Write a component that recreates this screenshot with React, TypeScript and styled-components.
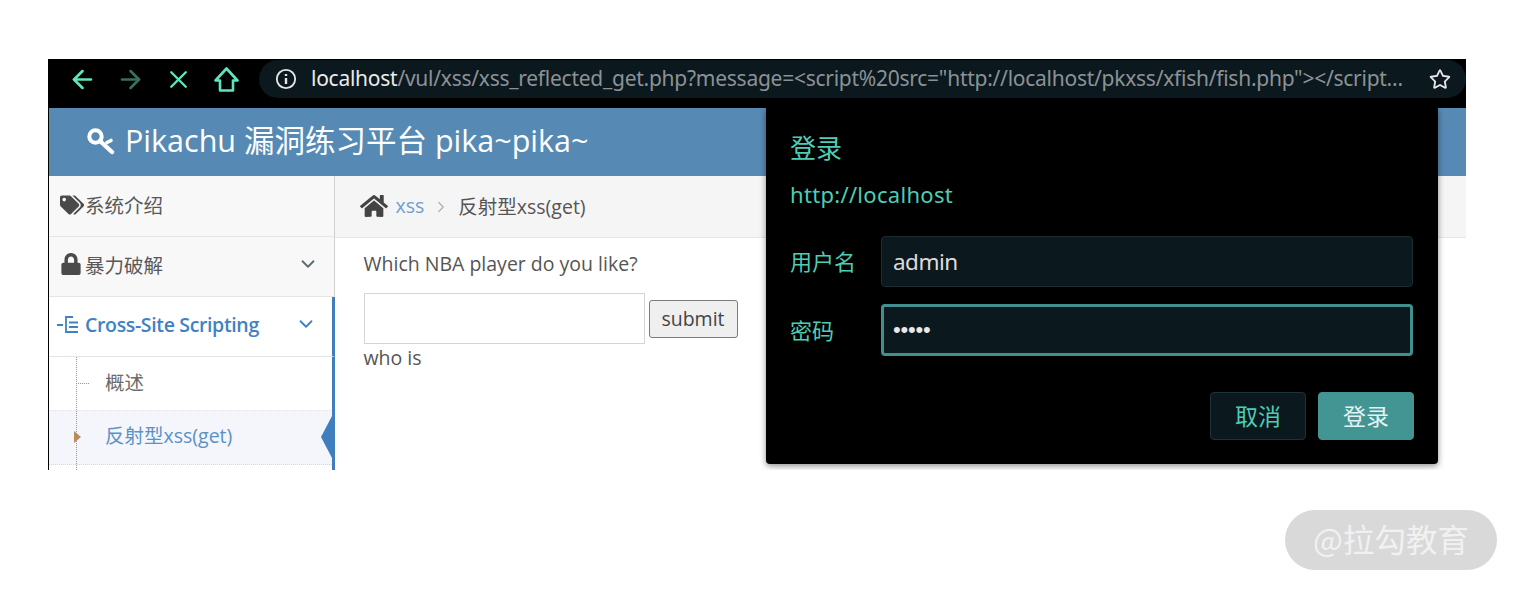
import React from 'react';
import styled, { createGlobalStyle } from 'styled-components';
import { ArrowLeft, ArrowRight, X, ChevronDown, ChevronRight } from 'lucide-react';
import { FaHome, FaLock, FaTags, FaRegStar } from 'react-icons/fa';

const GlobalStyle = createGlobalStyle`
  html, body { margin: 0; padding: 0; background: #fff; }
  body { font-family: "Open Sans", "Noto Sans CJK SC", sans-serif; overflow: hidden; }
`;

const Page = styled.div`
  position: relative;
  width: 1519px;
  height: 590px;
  padding: 59px 53px 0 48px;
  box-sizing: border-box;
`;

const Browser = styled.div`
  width: 1418px;
  height: 411px;
  position: relative;
  overflow: hidden;
  display: flex;
  flex-direction: column;
  background: #fff;
`;

const Toolbar = styled.div`
  height: 49px;
  flex: none;
  background: #000;
  display: flex;
  align-items: flex-start;
  padding-top: 1px;
  box-sizing: border-box;
`;

const NavIcons = styled.div`
  width: 211px;
  flex: none;
  height: 38px;
  display: flex;
  align-items: center;
  padding-left: 18px;
  gap: 16px;
  box-sizing: border-box;
`;

const NavSlot = styled.span<{ $dim?: boolean }>`
  width: 32px;
  height: 32px;
  display: flex;
  align-items: center;
  justify-content: center;
  color: ${(p) => (p.$dim ? '#37705f' : '#5fe3c0')};
`;

const Omnibox = styled.div`
  flex: 1;
  height: 38px;
  background: #0b181e;
  border-radius: 19px;
  display: flex;
  align-items: center;
  padding: 0 15px 0 16px;
  color: #e6e6e6;
  box-sizing: border-box;
`;

const InfoIcon = styled.svg`
  width: 22px;
  height: 22px;
  flex: none;
  margin-right: 14px;
`;

const UrlText = styled.div`
  flex: 1;
  min-width: 0;
  font-family: "Noto Sans", "Liberation Sans", sans-serif;
  font-size: 21px;
  line-height: 26px;
  padding-bottom: 2px;
  letter-spacing: -0.26px;
  white-space: nowrap;
  color: #8b9296;
`;

const Host = styled.span`
  color: #ececec;
`;

const StarWrap = styled.span`
  color: #e6e6e6;
  display: flex;
`;

const Header = styled.div`
  height: 68px;
  flex: none;
  box-sizing: border-box;
  background: #568ab5;
  border-left: 1.5px solid #000;
  display: flex;
  align-items: center;
  padding: 0 0 2px 37px;
  gap: 10px;
  color: #fff;
  font-size: 30.5px;
`;

const HeaderTitle = styled.span`
  line-height: 40px;
  margin-top: -2px;
`;

const Body = styled.div`
  flex: 1;
  display: flex;
  border-left: 1.5px solid #000;
  min-height: 0;
`;

const Sidebar = styled.div`
  width: 285.5px;
  flex: none;
  display: flex;
  flex-direction: column;
  background: #f8f8f8;
`;

const NavRow = styled.div<{ $open?: boolean; $first?: boolean }>`
  height: ${(p) => (p.$first ? '61px' : '60px')};
  flex: none;
  box-sizing: border-box;
  display: flex;
  align-items: center;
  padding: 0 15px ${(p) => (p.$first ? '3px' : '5px')} 11px;
  border-bottom: 1px solid #e5e5e5;
  border-right: ${(p) => (p.$open ? '3px solid #3f7fbf' : '1px solid #cfcfcf')};
  background: ${(p) => (p.$open ? '#fff' : '#f8f8f8')};
  color: ${(p) => (p.$open ? '#3f82c4' : '#585858')};
  font-size: 19.5px;
  font-weight: ${(p) => (p.$open ? 600 : 400)};
  letter-spacing: ${(p) => (p.$open ? '-0.35px' : '0')};
`;

const RowIcon = styled.span`
  width: 25px;
  flex: none;
  display: flex;
  align-items: center;
  color: #4a4a4a;
`;

const TreeSlot = styled(RowIcon)`
  margin-left: -3px;
  width: 28px;
`;

const RowLabel = styled.span`
  flex: 1;
`;

const SubMenu = styled.div`
  position: relative;
  flex: 1;
  background: #fff;
  border-right: 3px solid #3f7fbf;
`;

const SubLine = styled.span`
  position: absolute;
  z-index: 1;
  left: 27px;
  top: 0;
  bottom: 0;
  border-left: 1px dotted #7f9fc4;
`;

const SubRow = styled.div<{ $active?: boolean }>`
  height: ${(p) => (p.$active ? '55px' : '53px')};
  box-sizing: border-box;
  display: flex;
  align-items: center;
  padding: 0 0 ${(p) => (p.$active ? '7px' : '5px')} 56px;
  font-size: 19.5px;
  color: ${(p) => (p.$active ? '#5a92c8' : '#6b6b6b')};
  background: ${(p) => (p.$active ? '#f4f6fb' : '#fff')};
  border-bottom: ${(p) => (p.$active ? '1px dotted #d5d8dc' : 'none')};
  border-top: ${(p) => (p.$active ? '1px dotted #e1e3e6' : 'none')};
  position: relative;
`;

const Tick = styled.span`
  position: absolute;
  left: 29px;
  top: 26px;
  width: 11px;
  border-top: 1px dotted #7f9fc4;
`;

const Pointer = styled.span`
  position: absolute;
  z-index: 2;
  left: 25px;
  top: 20px;
  border-left: 7px solid #b98a5e;
  border-top: 6px solid transparent;
  border-bottom: 6px solid transparent;
`;

const Notch = styled.span`
  position: absolute;
  right: 0;
  top: 5px;
  border-right: 11px solid #3f7fbf;
  border-top: 21px solid transparent;
  border-bottom: 21px solid transparent;
`;

const Main = styled.div`
  flex: 1;
  display: flex;
  flex-direction: column;
`;

const Crumbs = styled.div`
  height: 62px;
  flex: none;
  box-sizing: border-box;
  background: #f5f5f5;
  border-bottom: 1px solid #e5e5e5;
  display: flex;
  align-items: center;
  padding: 0 0 2px 25px;
  font-size: 19.5px;
  color: #555;
`;

const CrumbHome = styled.span`
  display: flex;
  color: #444;
  margin-right: 8px;
`;

const CrumbLink = styled.span`
  color: #6fa0cc;
`;

const CrumbSep = styled.span`
  display: flex;
  color: #b5b5b5;
  margin: 2px 8px 0 8px;
`;

const Content = styled.div`
  padding: 12px 0 0 29px;
  color: #555;
  font-size: 19.5px;
  line-height: 28px;
`;

const FormRow = styled.div`
  display: flex;
  align-items: center;
  gap: 4px;
  margin-top: 15px;
`;

const TextBox = styled.div`
  width: 281px;
  height: 51px;
  box-sizing: border-box;
  border: 1.5px solid #d5d5d5;
  background: #fff;
`;

const Submit = styled.div`
  width: 89px;
  height: 38px;
  box-sizing: border-box;
  border: 1.5px solid #7b7b7b;
  border-radius: 3px;
  background: #efefef;
  display: flex;
  align-items: center;
  justify-content: center;
  font-size: 19.5px;
  color: #444;
`;

const Dialog = styled.div`
  position: absolute;
  left: 718px;
  top: 49px;
  width: 672px;
  height: 356px;
  box-sizing: border-box;
  background: #000;
  border-radius: 0 0 4px 4px;
  box-shadow: 0 2px 6px rgba(0, 0, 0, 0.45);
  padding: 20px 25px 0 24px;
  color: #4ecdb4;
  font-family: "Noto Sans", "Noto Sans CJK SC", sans-serif;
  display: flex;
  flex-direction: column;
`;

const DialogTitle = styled.div`
  font-size: 26px;
  line-height: 40px;
`;

const DialogOrigin = styled.div`
  font-size: 22px;
  line-height: 30px;
  margin-top: 11px;
  letter-spacing: 0.3px;
`;

const Field = styled.div`
  display: flex;
  align-items: center;
  margin-top: 17px;
  &:nth-of-type(3) {
    margin-top: 27px;
  }
`;

const FieldLabel = styled.div`
  width: 91px;
  flex: none;
  font-size: 22px;
  padding-bottom: 3px;
`;

const FieldBox = styled.div<{ $focus?: boolean }>`
  flex: 1;
  height: ${(p) => (p.$focus ? '52px' : '51px')};
  box-sizing: border-box;
  background: #0b181e;
  border: ${(p) => (p.$focus ? '3px solid #3f908e' : '1px solid #1c2c31')};
  border-radius: 4px;
  display: flex;
  align-items: center;
  padding-left: ${(p) => (p.$focus ? '9px' : '11px')};
  color: #dcdcdc;
  font-size: 22.5px;
  letter-spacing: -0.5px;
`;

const Dots = styled.span`
  font-size: 22px;
  letter-spacing: -0.2px;
  color: #e8e8e8;
  font-family: "Liberation Sans", sans-serif;
`;

const Actions = styled.div`
  display: flex;
  justify-content: flex-end;
  gap: 12px;
  margin: 36px -1px 0 0;
`;

const DialogButton = styled.div<{ $primary?: boolean }>`
  width: 96px;
  height: 48px;
  box-sizing: border-box;
  border-radius: 4px;
  padding-bottom: 2px;
  background: ${(p) => (p.$primary ? '#429593' : '#0b181e')};
  border: 1px solid ${(p) => (p.$primary ? '#429593' : '#1c3439')};
  color: ${(p) => (p.$primary ? '#e4f3f1' : '#4ecdb4')};
  font-size: 23px;
  display: flex;
  align-items: center;
  justify-content: center;
`;

const Watermark = styled.div`
  position: absolute;
  left: 1285px;
  top: 510px;
  width: 212px;
  height: 60px;
  box-sizing: border-box;
  padding-bottom: 4px;
  border-radius: 30px;
  background: #d9d9d9;
  color: #f1f1f1;
  font-family: "Noto Sans CJK SC", sans-serif;
  font-size: 31.5px;
  display: flex;
  align-items: center;
  justify-content: center;
`;

const HomeOutline = () => (
  <svg width="25" height="25" viewBox="0 0 25 25" fill="none" stroke="currentColor" strokeWidth="2.6" strokeLinejoin="round">
    <path d="M12.5 1.5 L23.5 13.5 H19 V23.5 H6 V13.5 H1.5 Z" />
  </svg>
);

const KeyIcon = () => (
  <svg width="29" height="29" viewBox="0 0 29 29" fill="none" stroke="#fff" strokeLinecap="round">
    <circle cx="9.5" cy="9.5" r="6.2" strokeWidth="4" />
    <path d="M14 14 L26 25" strokeWidth="4.4" />
    <path d="M21 15.5 L25 13.5" strokeWidth="3.6" />
  </svg>
);

const TreeIcon = () => (
  <svg width="22" height="17" viewBox="0 0 22 17" fill="none" stroke="#3f82c4" strokeWidth="1.8">
    <path d="M0 9 H6 M9 0 V17 M9 1 H16 M12 6.5 H21 M12 11 H21 M9 16 H21" />
  </svg>
);

const App: React.FC = () => {
  return (
    <Page>
      <GlobalStyle />
      <Browser>
        <Toolbar>
          <NavIcons>
            <NavSlot><ArrowLeft size={29} strokeWidth={2.2} /></NavSlot>
            <NavSlot $dim><ArrowRight size={29} strokeWidth={2.2} /></NavSlot>
            <NavSlot><X size={29} strokeWidth={2} /></NavSlot>
            <NavSlot><HomeOutline /></NavSlot>
          </NavIcons>
          <Omnibox>
            <InfoIcon viewBox="0 0 24 24" fill="none" stroke="#e6e6e6" strokeWidth="2">
              <circle cx="12" cy="12" r="10" />
              <path d="M12 11 V17.5 M12 6.5 V8.8" strokeWidth="2.6" />
            </InfoIcon>
            <UrlText>
              <Host>localhost</Host>/vul/xss/xss_reflected_get.php?message=&lt;script%20src="http://localhost/pkxss/xfish/fish.php"&gt;&lt;/script…
            </UrlText>
            <StarWrap><FaRegStar size={22} /></StarWrap>
          </Omnibox>
        </Toolbar>
        <Header>
          <KeyIcon />
          <HeaderTitle>Pikachu 漏洞练习平台 pika~pika~</HeaderTitle>
        </Header>
        <Body>
          <Sidebar>
            <NavRow $first>
              <RowIcon><FaTags size={24} /></RowIcon>
              <RowLabel>系统介绍</RowLabel>
            </NavRow>
            <NavRow>
              <RowIcon><FaLock size={22} /></RowIcon>
              <RowLabel>暴力破解</RowLabel>
              <ChevronDown size={22} strokeWidth={2} color="#5c6a70" />
            </NavRow>
            <NavRow $open>
              <TreeSlot><TreeIcon /></TreeSlot>
              <RowLabel>Cross-Site Scripting</RowLabel>
              <ChevronDown size={22} strokeWidth={2} color="#3f82c4" />
            </NavRow>
            <SubMenu>
              <SubLine />
              <SubRow><Tick />概述</SubRow>
              <SubRow $active><Pointer />反射型xss(get)<Notch /></SubRow>
            </SubMenu>
          </Sidebar>
          <Main>
            <Crumbs>
              <CrumbHome><FaHome size={28} /></CrumbHome>
              <CrumbLink>xss</CrumbLink>
              <CrumbSep><ChevronRight size={18} strokeWidth={2} /></CrumbSep>
              <span>反射型xss(get)</span>
            </Crumbs>
            <Content>
              <div>Which NBA player do you like?</div>
              <FormRow>
                <TextBox />
                <Submit>submit</Submit>
              </FormRow>
              <div>who is</div>
            </Content>
          </Main>
        </Body>
        <Dialog>
          <DialogTitle>登录</DialogTitle>
          <DialogOrigin>http://localhost</DialogOrigin>
          <Field>
            <FieldLabel>用户名</FieldLabel>
            <FieldBox>admin</FieldBox>
          </Field>
          <Field>
            <FieldLabel>密码</FieldLabel>
            <FieldBox $focus><Dots>•••••</Dots></FieldBox>
          </Field>
          <Actions>
            <DialogButton>取消</DialogButton>
            <DialogButton $primary>登录</DialogButton>
          </Actions>
        </Dialog>
      </Browser>
      <Watermark>@拉勾教育</Watermark>
    </Page>
  );
};

export default App;
